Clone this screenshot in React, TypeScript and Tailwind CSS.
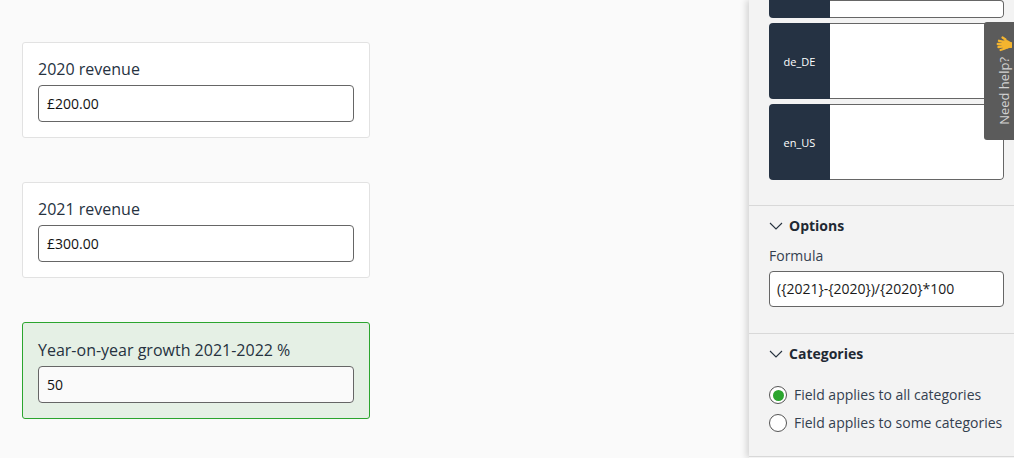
const Field = ({ label, value, active }: { label: string; value: string; active?: boolean }) => (
  <div
    className={
      active
        ? "w-[348px] h-[97px] rounded-[3px] border border-[#2ba52e] bg-[#e5f0e5] px-[15px] pt-[16px]"
        : "w-[348px] h-[96px] rounded-[3px] border border-[#e2e2e2] bg-white px-[15px] pt-[15px]"
    }
  >
    <div className="text-[16px] leading-[22px] text-[#26323f]">{label}</div>
    <div
      className={`mt-[5px] h-[37px] rounded-[4px] border border-[#666] px-[8px] text-[14px] leading-[35px] text-[#111] ${
        active ? "bg-[#fafafa]" : "bg-white"
      }`}
    >
      {value}
    </div>
  </div>
);

const LangRow = ({ label, className }: { label?: string; className: string }) => (
  <div className={`flex w-[235px] overflow-hidden rounded-[4px] ${className}`}>
    <div className="flex w-[61px] shrink-0 items-center justify-center bg-[#253243] pt-[2px] text-[11px] text-white">
      {label}
    </div>
    <div className="flex-1 rounded-r-[4px] border-y border-r border-[#666] bg-white" />
  </div>
);

const Chevron = () => (
  <svg width="14" height="8" viewBox="0 0 14 8" fill="none" stroke="#26323f" strokeWidth="1.1">
    <path d="M1 1l6 6 6-6" />
  </svg>
);

const SectionTitle = ({ title }: { title: string }) => (
  <div className="flex items-center gap-[6px] text-[14px] font-bold leading-[20px] text-[#1f2933]">
    <Chevron />
    {title}
  </div>
);

const Radio = ({ label, checked }: { label: string; checked?: boolean }) => (
  <div className="flex h-[28px] items-center gap-[7px]">
    <span className="flex h-[18px] w-[18px] shrink-0 items-center justify-center rounded-full border border-[#555] bg-white">
      {checked && <span className="h-[11px] w-[11px] rounded-full bg-[#2ba52e]" />}
    </span>
    <span className="relative top-[-1px] whitespace-nowrap text-[14px] text-[#33404f]">{label}</span>
  </div>
);

export default function App() {
  return (
    <div
      className="relative flex h-[458px] w-[1014px] overflow-hidden bg-[#fafafa]"
      style={{ fontFamily: '"Open Sans", sans-serif' }}
    >
      <main className="flex w-[749px] shrink-0 flex-col gap-[44px] pl-[22px] pt-[42px]">
        <Field label="2020 revenue" value="£200.00" />
        <Field label="2021 revenue" value="£300.00" />
        <Field label="Year-on-year growth 2021-2022 %" value="50" active />
      </main>

      <aside className="w-[265px] shrink-0 bg-[#f3f3f3] shadow-[-3px_0_6px_rgba(0,0,0,0.14)]">
        <div className="flex flex-col gap-[5px] px-[20px]">
          <LangRow className="h-[18px] rounded-t-none" />
          <LangRow label="de_DE" className="h-[76px]" />
          <LangRow label="en_US" className="h-[76px]" />
        </div>
        <div className="mt-[25px] h-[128px] border-t border-[#d8d8d8] px-[20px] pt-[10px]">
          <SectionTitle title="Options" />
          <div className="mt-[10px] text-[14px] leading-[20px] text-[#33404f]">Formula</div>
          <div className="mt-[5px] h-[36px] w-[235px] rounded-[4px] border border-[#666] bg-white px-[7px] text-[14px] leading-[34px] text-[#1a1a1a]">
            {"({2021}-{2020})/{2020}*100"}
          </div>
        </div>
        <div className="h-[124px] border-y border-[#d8d8d8] px-[20px] pt-[10px]">
          <SectionTitle title="Categories" />
          <div className="mt-[17px]">
            <Radio label="Field applies to all categories" checked />
            <Radio label="Field applies to some categories" />
          </div>
        </div>
      </aside>

      <div className="absolute right-0 top-[22px] flex h-[118px] w-[30px] flex-col items-center rounded-l-[3px] bg-[#5b5b5b] pl-[10px] pt-[14px]">
        <svg width="16" height="16" viewBox="0 0 16 16" className="shrink-0" fill="none" stroke="#f4b52f" strokeLinecap="round">
          <circle cx="10" cy="8.500" r="4.600" fill="#f4b52f" stroke="none" />
          <path d="M11 8.500L14.500 9" strokeWidth="6" />
          <path d="M9.500 3.500L6.500 1.500" strokeWidth="2.200" />
          <path d="M8 6L3 4.800" strokeWidth="2.400" />
          <path d="M8 8.200L1.800 8" strokeWidth="2.400" />
          <path d="M8 10.400L2.500 11" strokeWidth="2.400" />
          <path d="M9 12.500L4.500 14" strokeWidth="2.200" />
        </svg>
        <span className="mt-[5px] rotate-180 text-[13px] leading-[20px] text-[#d2d2d2] [writing-mode:vertical-rl]">
          Need help?
        </span>
      </div>
    </div>
  );
}
